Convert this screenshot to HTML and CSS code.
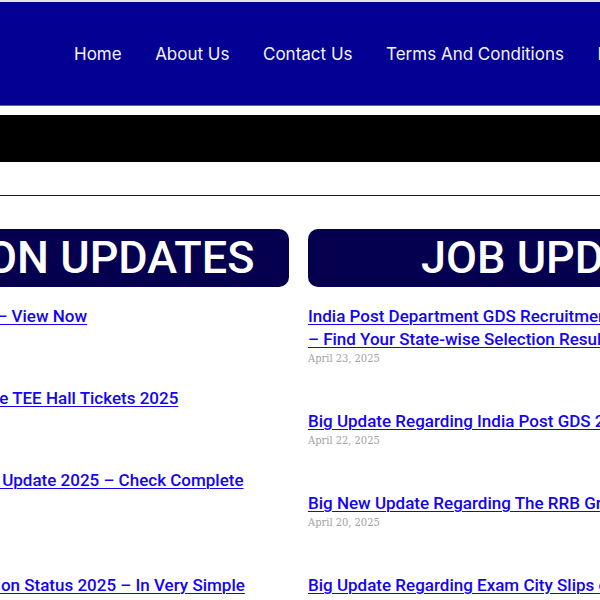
FILE: index.html
```html
<!DOCTYPE html>
<html lang="en">
<head>
<meta charset="utf-8">
<title>Updates</title>
<link rel="stylesheet" href="styles.css">
</head>
<body>
<div class="page">
  <div class="topline"></div>
  <header class="site-header">
    <nav class="menu">
      <a href="#">Home</a>
      <a href="#">About Us</a>
      <a href="#">Contact Us</a>
      <a href="#">Terms And Conditions</a>
      <a href="#">Privacy Policy</a>
    </nav>
  </header>
  <div class="black-bar"></div>
  <hr class="divider">
  <main class="columns">
    <section class="col">
      <h2 class="col-title">ADMISSION UPDATES</h2>
      <ul class="posts">
        <li><a href="#">TS EAMCET Hall Ticket 2025 – View Now</a><span class="date">April 24, 2025</span></li>
        <li><a href="#">Download The Telangana State TEE Hall Tickets 2025</a><span class="date">April 23, 2025</span></li>
        <li><a href="#">The SSC GD Constable Result Update 2025 – Check Complete Information</a><span class="date">April 22, 2025</span></li>
        <li><a href="#">Check The PM Kisan Application Status 2025 – In Very Simple Language</a><span class="date">April 21, 2025</span></li>
      </ul>
    </section>
    <section class="col">
      <h2 class="col-title">JOB UPDATES</h2>
      <ul class="posts">
        <li><a href="#">India Post Department GDS Recruitment 2025 Third Merit List <span class="keep">– Find Your</span> State-wise Selection Result Now</a><span class="date">April 23, 2025</span></li>
        <li><a href="#">Big Update Regarding India Post GDS 2025 Merit List</a><span class="date">April 22, 2025</span></li>
        <li><a href="#">Big New Update Regarding The RRB Group D Exam</a><span class="date">April 20, 2025</span></li>
        <li><a href="#">Big Update Regarding Exam City Slips of RRB ALP</a><span class="date">April 19, 2025</span></li>
      </ul>
    </section>
  </main>
</div>
</body>
</html>
```
FILE: styles.css
```css
html, body {
  margin: 0;
  padding: 0;
  background: #ffffff;
  overflow: hidden;
}
.page {
  width: 600px;
  overflow: hidden;
}
.topline {
  height: 2px;
  background: #e2e2e2;
}
.site-header {
  height: 103px;
  background: #040094;
  border-bottom: 1px solid #5a5acf;
  display: flex;
  align-items: center;
}
.menu {
  display: flex;
  gap: 33.5px;
  padding-left: 74px;
  white-space: nowrap;
}
.menu a {
  color: #f4f4fa;
  text-decoration: none;
  font-family: Inter, "Liberation Sans", sans-serif;
  font-size: 17px;
  line-height: 20px;
}
.black-bar {
  margin-top: 9px;
  height: 47px;
  background: #000000;
}
.divider {
  margin: 33px 0 0 0;
  border: 0;
  height: 1px;
  background: #1c1c1c;
}
.columns {
  display: flex;
  gap: 19px;
  width: 1051px;
  margin-left: -227px;
  margin-top: 33px;
}
.col {
  width: 516px;
  flex: 0 0 516px;
}
.col-title {
  margin: 0;
  height: 58px;
  border-radius: 10px;
  background: #04004f;
  color: #ffffff;
  font-family: Roboto, "Liberation Sans", sans-serif;
  font-weight: 500;
  font-size: 45px;
  line-height: 58px;
  text-align: center;
  white-space: nowrap;
  overflow: hidden;
}
.posts {
  list-style: none;
  margin: 18px 0 0 0;
  padding: 0;
  display: flex;
  flex-direction: column;
  gap: 45px;
}
.posts li {
  display: flex;
  flex-direction: column;
}
.posts a {
  color: #1405f0;
  font-family: Roboto, "Liberation Sans", sans-serif;
  font-weight: 500;
  font-size: 17px;
  line-height: 23px;
  text-decoration: underline;
  text-decoration-thickness: 1px;
  text-underline-offset: 2px;
}
.keep {
  white-space: nowrap;
}
.date {
  margin-top: 1px;
  font-family: "DejaVu Serif Condensed", "DejaVu Serif", serif;
  font-size: 11px;
  line-height: 13px;
  color: #a2a2a2;
}
```
